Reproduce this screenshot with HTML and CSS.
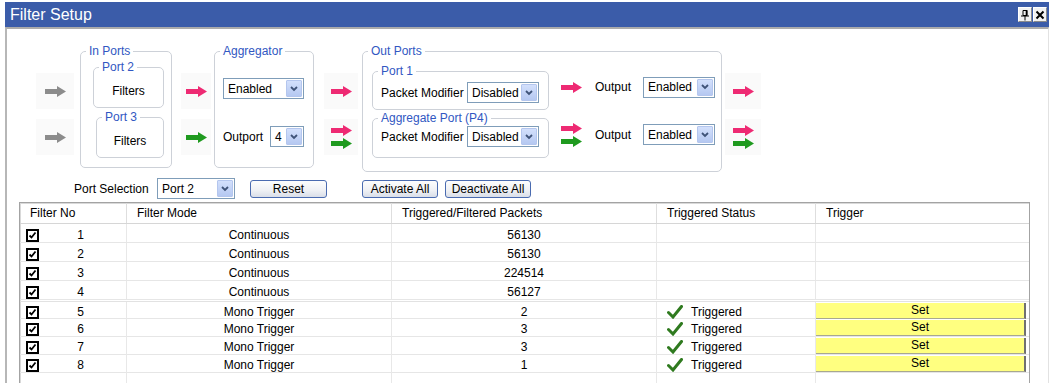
FILE: index.html
```html
<!DOCTYPE html>
<html lang="en">
  <head>
    <meta charset="utf-8">
    <link rel="stylesheet" href="styles.css">
    <title>Filter Setup</title>
  </head>
  <body>
    <svg class="defs" width="0" height="0">
      <symbol id="arrow" viewBox="0 0 21 11"><path d="M0 3h12V0l9 5.5L12 11V8H0z"/></symbol>
    </svg>

    <div class="window">
      <div class="titlebar">
        <span class="title">Filter Setup</span>
        <span class="tb-buttons">
          <span class="tb-btn">
            <svg width="10" height="12" viewBox="0 0 10 12"><path d="M3 1.5h4v5H3z" fill="none" stroke="#000"/><path d="M6.5 1v6" stroke="#000" stroke-width="1.6"/><path d="M1 7h8M5 7v4.5" stroke="#000"/></svg>
          </span>
          <span class="tb-btn">
            <svg width="10" height="10" viewBox="0 0 10 10"><path d="M1.5 1.5l7 7M8.5 1.5l-7 7" stroke="#000" stroke-width="2"/></svg>
          </span>
        </span>
      </div>

      <div class="pane">
        <div class="flow">
          <div class="arrows col-in">
            <div class="cell"><svg class="arr gray"><use href="#arrow"/></svg></div>
            <div class="cell"><svg class="arr gray"><use href="#arrow"/></svg></div>
          </div>

          <fieldset class="group in-ports">
            <legend>In Ports</legend>
            <fieldset class="port"><legend>Port 2</legend><div class="filters">Filters</div></fieldset>
            <fieldset class="port port-b"><legend>Port 3</legend><div class="filters">Filters</div></fieldset>
          </fieldset>

          <div class="arrows col-agg">
            <div class="cell"><svg class="arr pink"><use href="#arrow"/></svg></div>
            <div class="cell"><svg class="arr green"><use href="#arrow"/></svg></div>
          </div>

          <fieldset class="group aggregator">
            <legend>Aggregator</legend>
            <div class="dd dd-agg"><span class="dd-text">Enabled</span><span class="dd-btn"><svg width="8" height="6" viewBox="0 0 8 6"><path d="M1 1l3 3 3-3" fill="none" stroke="#3f5378" stroke-width="1.8"/></svg></span></div>
            <div class="outport">
              <span>Outport</span>
              <div class="dd dd-num"><span class="dd-text">4</span><span class="dd-btn"><svg width="8" height="6" viewBox="0 0 8 6"><path d="M1 1l3 3 3-3" fill="none" stroke="#3f5378" stroke-width="1.8"/></svg></span></div>
            </div>
          </fieldset>

          <div class="arrows col-out">
            <div class="cell"><svg class="arr pink"><use href="#arrow"/></svg></div>
            <div class="cell">
              <svg class="arr2"><use href="#arrow" class="pink" width="21" height="11"/><use href="#arrow" class="green" y="13" width="21" height="11"/></svg>
            </div>
          </div>

          <fieldset class="group out-ports">
            <legend>Out Ports</legend>
            <div class="out-grid">
              <fieldset class="port-out">
                <legend>Port 1</legend>
                <div class="pm-row">
                  <span>Packet Modifier</span>
                  <div class="dd dd-pm"><span class="dd-text">Disabled</span><span class="dd-btn"><svg width="8" height="6" viewBox="0 0 8 6"><path d="M1 1l3 3 3-3" fill="none" stroke="#3f5378" stroke-width="1.8"/></svg></span></div>
                </div>
              </fieldset>
              <svg class="arr pink"><use href="#arrow"/></svg>
              <span>Output</span>
              <div class="dd dd-pm"><span class="dd-text">Enabled</span><span class="dd-btn"><svg width="8" height="6" viewBox="0 0 8 6"><path d="M1 1l3 3 3-3" fill="none" stroke="#3f5378" stroke-width="1.8"/></svg></span></div>

              <fieldset class="port-out port-agg">
                <legend>Aggregate Port (P4)</legend>
                <div class="pm-row">
                  <span>Packet Modifier</span>
                  <div class="dd dd-pm"><span class="dd-text">Disabled</span><span class="dd-btn"><svg width="8" height="6" viewBox="0 0 8 6"><path d="M1 1l3 3 3-3" fill="none" stroke="#3f5378" stroke-width="1.8"/></svg></span></div>
                </div>
              </fieldset>
              <svg class="arr2"><use href="#arrow" class="pink" width="21" height="11"/><use href="#arrow" class="green" y="13" width="21" height="11"/></svg>
              <span>Output</span>
              <div class="dd dd-pm"><span class="dd-text">Enabled</span><span class="dd-btn"><svg width="8" height="6" viewBox="0 0 8 6"><path d="M1 1l3 3 3-3" fill="none" stroke="#3f5378" stroke-width="1.8"/></svg></span></div>
            </div>
          </fieldset>

          <div class="arrows col-end">
            <div class="cell"><svg class="arr pink"><use href="#arrow"/></svg></div>
            <div class="cell">
              <svg class="arr2"><use href="#arrow" class="pink" width="21" height="11"/><use href="#arrow" class="green" y="13" width="21" height="11"/></svg>
            </div>
          </div>
        </div>

        <div class="controls">
          <span class="sel-label">Port Selection</span>
          <div class="dd dd-port"><span class="dd-text">Port 2</span><span class="dd-btn"><svg width="8" height="6" viewBox="0 0 8 6"><path d="M1 1l3 3 3-3" fill="none" stroke="#3f5378" stroke-width="1.8"/></svg></span></div>
          <button class="btn btn-reset">Reset</button>
          <button class="btn btn-act">Activate All</button>
          <button class="btn btn-deact">Deactivate All</button>
        </div>

        <div class="filters-table">
          <div class="row head">
            <div class="c">Filter No</div>
            <div class="c">Filter Mode</div>
            <div class="c">Triggered/Filtered Packets</div>
            <div class="c">Triggered Status</div>
            <div class="c">Trigger</div>
          </div>

          <div class="row">
            <div class="c c-no"><svg class="chk" viewBox="0 0 13 13"><rect x="1" y="1" width="11" height="11" fill="#fff" stroke="#000" stroke-width="2"/><path d="M3.5 6.5l2 2 4-5" fill="none" stroke="#000" stroke-width="1.8"/></svg><span>1</span></div>
            <div class="c mid">Continuous</div>
            <div class="c mid">56130</div>
            <div class="c"></div>
            <div class="c"></div>
          </div>
          <div class="row">
            <div class="c c-no"><svg class="chk" viewBox="0 0 13 13"><rect x="1" y="1" width="11" height="11" fill="#fff" stroke="#000" stroke-width="2"/><path d="M3.5 6.5l2 2 4-5" fill="none" stroke="#000" stroke-width="1.8"/></svg><span>2</span></div>
            <div class="c mid">Continuous</div>
            <div class="c mid">56130</div>
            <div class="c"></div>
            <div class="c"></div>
          </div>
          <div class="row">
            <div class="c c-no"><svg class="chk" viewBox="0 0 13 13"><rect x="1" y="1" width="11" height="11" fill="#fff" stroke="#000" stroke-width="2"/><path d="M3.5 6.5l2 2 4-5" fill="none" stroke="#000" stroke-width="1.8"/></svg><span>3</span></div>
            <div class="c mid">Continuous</div>
            <div class="c mid">224514</div>
            <div class="c"></div>
            <div class="c"></div>
          </div>
          <div class="row">
            <div class="c c-no"><svg class="chk" viewBox="0 0 13 13"><rect x="1" y="1" width="11" height="11" fill="#fff" stroke="#000" stroke-width="2"/><path d="M3.5 6.5l2 2 4-5" fill="none" stroke="#000" stroke-width="1.8"/></svg><span>4</span></div>
            <div class="c mid">Continuous</div>
            <div class="c mid">56127</div>
            <div class="c"></div>
            <div class="c"></div>
          </div>

          <div class="row mono split">
            <div class="c c-no"><svg class="chk" viewBox="0 0 13 13"><rect x="1" y="1" width="11" height="11" fill="#fff" stroke="#000" stroke-width="2"/><path d="M3.5 6.5l2 2 4-5" fill="none" stroke="#000" stroke-width="1.8"/></svg><span>5</span></div>
            <div class="c mid">Mono Trigger</div>
            <div class="c mid">2</div>
            <div class="c status"><svg class="tick" viewBox="0 0 16 14"><path d="M1.5 7.5l4.5 4.5L14.5 1.5" fill="none" stroke="#2f7a1f" stroke-width="3" stroke-linecap="round"/></svg>Triggered</div>
            <div class="c trig"><span class="set">Set</span></div>
          </div>
          <div class="row mono">
            <div class="c c-no"><svg class="chk" viewBox="0 0 13 13"><rect x="1" y="1" width="11" height="11" fill="#fff" stroke="#000" stroke-width="2"/><path d="M3.5 6.5l2 2 4-5" fill="none" stroke="#000" stroke-width="1.8"/></svg><span>6</span></div>
            <div class="c mid">Mono Trigger</div>
            <div class="c mid">3</div>
            <div class="c status"><svg class="tick" viewBox="0 0 16 14"><path d="M1.5 7.5l4.5 4.5L14.5 1.5" fill="none" stroke="#2f7a1f" stroke-width="3" stroke-linecap="round"/></svg>Triggered</div>
            <div class="c trig"><span class="set">Set</span></div>
          </div>
          <div class="row mono">
            <div class="c c-no"><svg class="chk" viewBox="0 0 13 13"><rect x="1" y="1" width="11" height="11" fill="#fff" stroke="#000" stroke-width="2"/><path d="M3.5 6.5l2 2 4-5" fill="none" stroke="#000" stroke-width="1.8"/></svg><span>7</span></div>
            <div class="c mid">Mono Trigger</div>
            <div class="c mid">3</div>
            <div class="c status"><svg class="tick" viewBox="0 0 16 14"><path d="M1.5 7.5l4.5 4.5L14.5 1.5" fill="none" stroke="#2f7a1f" stroke-width="3" stroke-linecap="round"/></svg>Triggered</div>
            <div class="c trig"><span class="set">Set</span></div>
          </div>
          <div class="row mono">
            <div class="c c-no"><svg class="chk" viewBox="0 0 13 13"><rect x="1" y="1" width="11" height="11" fill="#fff" stroke="#000" stroke-width="2"/><path d="M3.5 6.5l2 2 4-5" fill="none" stroke="#000" stroke-width="1.8"/></svg><span>8</span></div>
            <div class="c mid">Mono Trigger</div>
            <div class="c mid">1</div>
            <div class="c status"><svg class="tick" viewBox="0 0 16 14"><path d="M1.5 7.5l4.5 4.5L14.5 1.5" fill="none" stroke="#2f7a1f" stroke-width="3" stroke-linecap="round"/></svg>Triggered</div>
            <div class="c trig"><span class="set">Set</span></div>
          </div>
          <div class="row mono">
            <div class="c"></div><div class="c"></div><div class="c"></div><div class="c"></div><div class="c"></div>
          </div>
        </div>
      </div>
    </div>
  </body>
</html>
```

FILE: styles.css
```css
* { box-sizing: border-box; }
html, body {
    margin: 0;
    height: 383px;
    overflow: hidden;
    background: #fff;
}
body {
    font-family: "Liberation Sans", Arial, sans-serif;
    font-size: 12px;
    color: #000;
}
.defs { position: absolute; }

.window {
    margin: 2px 3px 0 5px;
}
.titlebar {
    height: 25px;
    background: #3b5ca9;
    display: flex;
    align-items: center;
    justify-content: space-between;
    padding: 0 2px 0 5px;
}
.title {
    color: #fff;
    font-size: 16px;
}
.tb-buttons { display: flex; }
.tb-btn {
    width: 14px;
    height: 15px;
    background: #f2f2f2;
    border: 1px solid;
    border-color: #fff #8a8a8a #8a8a8a #fff;
    display: flex;
    align-items: center;
    justify-content: center;
    margin-left: 1px;
}

.pane {
    border-top: 2px solid #ababab;
    border-left: 2px solid #b7b7b7;
    border-right: 1px solid #e2e2e2;
    height: 400px;
    padding-left: 1px;
}

/* top config diagram */
.flow {
    display: flex;
    align-items: flex-start;
    padding: 15px 0 0 28px;
}
fieldset {
    margin: 0;
    padding: 0;
    min-width: 0;
    border: 1px solid #cdd1d8;
    border-radius: 5px;
}
legend {
    padding: 0 3px;
    margin-left: 5px;
    color: #3157c2;
    line-height: 14px;
}
.arrows {
    display: flex;
    flex-direction: column;
    gap: 10px;
    margin-top: 29px;
}
.arrows .cell {
    height: 36px;
    background: #fafafa;
    display: flex;
    align-items: center;
    justify-content: center;
}
.col-in .cell { width: 38px; }
.col-in { margin-right: 6px; }
.col-agg { margin: 29px 3px 0 9px; }
.col-agg .cell { width: 30px; }
.col-out { margin: 29px 4px 0 10px; }
.col-out .cell { width: 34px; }
.col-end { margin: 29px 0 0 3px; }
.col-end .cell { width: 36px; }

.arr { width: 21px; height: 11px; }
.arr2 { width: 21px; height: 24px; }
.gray { fill: #8c8c8c; }
.pink { fill: #ee2a73; }
.green { fill: #1f9a1f; }

.group { height: 124px; }
.in-ports { width: 92px; }
.port {
    height: 48px;
    margin: 2px 7px 0 12px;
}
.port-b { margin-left: 15px; }
.filters {
    text-align: center;
    padding-top: 10px;
    line-height: 14px;
}

.aggregator { width: 100px; }
.dd-agg { margin: 20px 0 0 8px; width: 81px; }
.outport {
    margin: 27px 9px 0 8px;
    display: flex;
    align-items: center;
    justify-content: space-between;
}

.out-ports { width: 360px; height: 128px; }
.out-grid {
    margin: 6px 11px 0 9px;
    display: grid;
    grid-template-columns: 177px 21px 37px 72px;
    grid-template-rows: 46px 47px;
    column-gap: 12px;
    row-gap: 1px;
    align-items: center;
}
.out-grid > span { margin-left: 1px; }
.port-out { height: 100%; }
.pm-row {
    margin: 4px 9px 0 8px;
    display: flex;
    align-items: center;
    justify-content: space-between;
}
.port-agg .pm-row { margin-top: 1px; }

/* dropdown look */
.dd {
    height: 21px;
    border: 1px solid #7f9db9;
    background: #fff;
    display: flex;
    align-items: center;
    justify-content: space-between;
    padding: 1px;
}
.dd-text { padding-left: 3px; }
.dd-btn {
    width: 16px;
    height: 100%;
    background: linear-gradient(#d3e0fc, #b5c8f1);
    border: 1px solid #b4c6ee;
    border-radius: 1px;
    display: flex;
    align-items: center;
    justify-content: center;
}
.dd-num { width: 34px; }
.dd-pm { width: 72px; }
.dd-port { width: 78px; }

/* controls row */
.controls {
    display: flex;
    align-items: center;
    height: 21px;
    margin-top: 6px;
    padding-left: 66px;
}
.sel-label { width: 83px; }
.btn {
    height: 18px;
    padding: 0;
    font: inherit;
    color: #000;
    background: linear-gradient(#fdfdfd, #eef0f4 60%, #d9dee8);
    border: 1px solid #4a6bb0;
    border-radius: 3px;
}
.btn-reset { width: 77px; margin-left: 15px; }
.btn-act { width: 76px; margin-left: 35px; }
.btn-deact { width: 86px; margin-left: 7px; }

/* filter table */
.filters-table {
    margin: 3px 0 0 11px;
    width: 1011px;
    border: 1px solid #a3a3a3;
    box-shadow: inset 1px 1px 0 #d9d9d9;
}
.row {
    display: grid;
    grid-template-columns: 106px 265px 265px 159px 1fr;
    height: 19px;
    border-bottom: 1px solid #e6e6e6;
}
.row .c + .c { border-left: 1px solid #e8e8e8; }
.c {
    display: flex;
    align-items: center;
    padding-top: 4px;
    white-space: nowrap;
}
.head { height: 21px; border-bottom-color: #d6d6d6; }
.head .c { padding: 0 0 0 10px; }
.head .c + .c { border-left-color: #dedede; }
.mid { justify-content: center; }
.c-no { padding-left: 6px; }
.c-no span { flex: 1; text-align: center; padding-right: 4px; }
.chk { width: 13px; height: 13px; }
.mono { height: 18px; }
.mono .c { padding-top: 2px; }
.split { margin-top: 1px; border-top: 1px solid #e2e2e2; }
.status { padding-left: 10px; }
.tick { width: 16px; height: 14px; margin-right: 8px; }
.mono .trig { padding: 1px 3px 1px 0; }
.set {
    flex: 1;
    height: 16px;
    background: #ffff80;
    border-right: 2px solid #707070;
    border-bottom: 1px solid #a8a890;
    text-align: center;
    line-height: 15px;
}
```
